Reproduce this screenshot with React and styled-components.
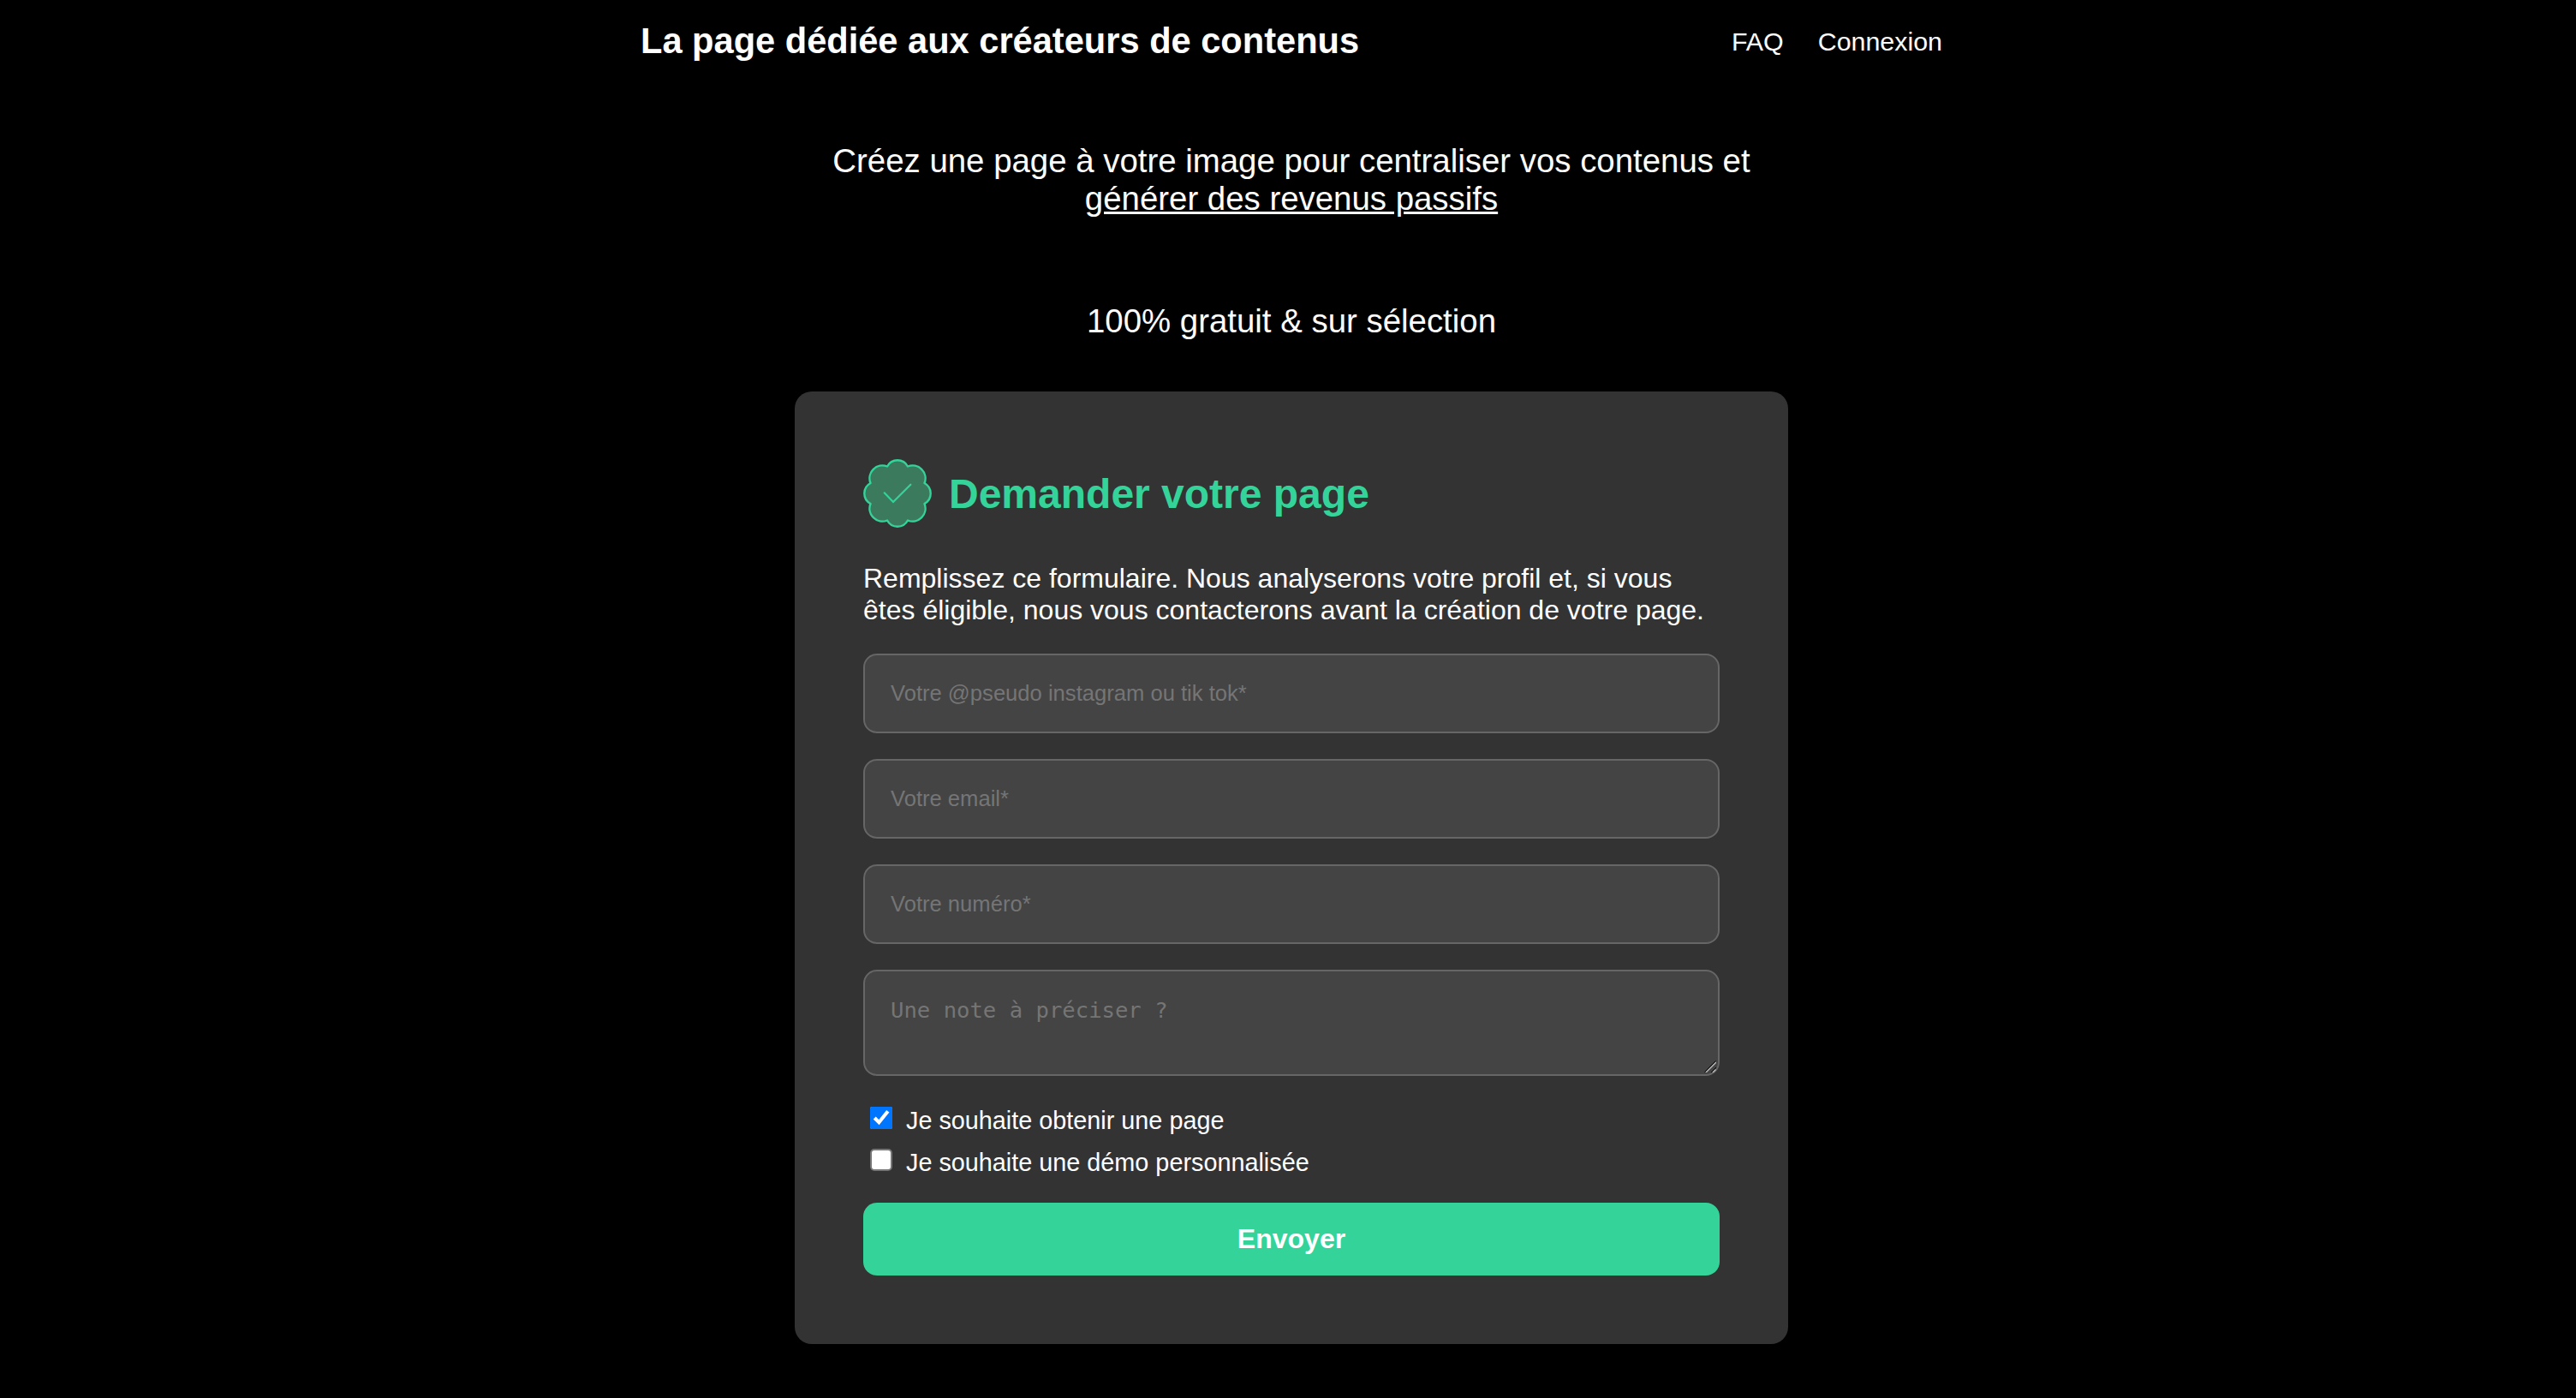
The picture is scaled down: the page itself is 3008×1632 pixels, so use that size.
import React, { useState } from "react";
import styled, { createGlobalStyle } from "styled-components";

const GlobalStyle = createGlobalStyle`
  * {
    box-sizing: border-box;
  }
  body {
    margin: 0 0 0 8px;
    background-color: #000;
    color: #fff;
    font-family: Arial, "Liberation Sans", sans-serif;
  }
  html {
    background-color: #000;
  }
`;

const Page = styled.div`
  display: flex;
  flex-direction: column;
  align-items: center;
  min-height: 1632px;
`;

const Header = styled.header`
  display: flex;
  justify-content: space-between;
  align-items: center;
  width: 1520px;
  height: 96px;
`;

const Title = styled.h1`
  margin: 0;
  font-size: 41.6px;
  line-height: 48px;
`;

const Nav = styled.nav`
  display: flex;
  gap: 40px;
`;

const NavLink = styled.a`
  color: #fff;
  font-size: 30.4px;
  line-height: 35px;
  text-decoration: none;
`;

const Intro = styled.section`
  margin: 70px 0 60px;
  width: 1160px;
  text-align: center;
  font-size: 38.4px;
  line-height: 44px;
`;

const Line = styled.p`
  margin: ${({ $top }) => $top || 0}px 0 0;
`;

const Card = styled.form`
  display: flex;
  flex-direction: column;
  width: 1160px;
  padding: 79px 80px 80px;
  border-radius: 20px;
  background-color: #333;
`;

const CardHeader = styled.div`
  display: flex;
  align-items: center;
  gap: 20px;
  height: 80px;
`;

const CardTitle = styled.h2`
  margin: 0;
  padding-top: 2px;
  color: #34d399;
  font-size: 48px;
  line-height: 56px;
`;

const Desc = styled.p`
  margin: 41px 0 32px;
  font-size: 32px;
  line-height: 37px;
`;

const Input = styled.input`
  width: 100%;
  height: 93px;
  margin: 0 0 30px;
  padding: 0 30px;
  border: 2px solid #666;
  border-radius: 16px;
  outline: none;
  background-color: #444;
  color: #fff;
  font-family: Arial, "Liberation Sans", sans-serif;
  font-size: 25.6px;
  &::placeholder {
    color: #757575;
  }
`;

const NoteWrapper = styled.div`
  position: relative;
  height: 124px;
  margin-bottom: 36px;
`;

const Note = styled.textarea`
  display: block;
  width: 100%;
  height: 100%;
  padding: 30px;
  border: 2px solid #666;
  border-radius: 16px;
  outline: none;
  resize: none;
  overflow: hidden;
  background-color: #444;
  color: #fff;
  font-family: "DejaVu Sans Mono", monospace;
  font-size: 25.6px;
  line-height: 30px;
  &::placeholder {
    color: #757575;
  }
`;

const Grip = styled.svg`
  position: absolute;
  right: 4px;
  bottom: 4px;
  pointer-events: none;
`;

const Choices = styled.div`
  display: flex;
  flex-direction: column;
  gap: 16px;
  margin-bottom: 30px;
`;

const Choice = styled.label`
  display: flex;
  align-items: flex-start;
  gap: 16px;
  padding-left: 8px;
  height: 33px;
  font-size: 28.8px;
  line-height: 33px;
`;

const Checkbox = styled.input`
  width: 26px;
  height: 26px;
  margin: 0;
  &:not(:checked) {
    appearance: none;
    border: 2px solid #767676;
    border-radius: 5px;
    background-color: #fff;
  }
`;

const Submit = styled.button`
  height: 85px;
  border: none;
  border-radius: 16px;
  background-color: #34d399;
  color: #fff;
  font-family: Arial, "Liberation Sans", sans-serif;
  font-size: 32px;
  font-weight: 700;
  cursor: pointer;
`;

const Badge = () => (
  <svg width="80" height="80" viewBox="0 0 80 80" fill="none">
    <path
      d="M28 8.5A13.6 13.6 0 0 1 52 8.5A15 15 0 0 1 71.5 28A13.6 13.6 0 0 1 71.5 52A15 15 0 0 1 52 71.5A13.6 13.6 0 0 1 28 71.5A15 15 0 0 1 8.5 52A13.6 13.6 0 0 1 8.5 28A15 15 0 0 1 28 8.5Z"
      fill="#3c7a5e"
      stroke="#34d399"
      strokeWidth="2.4"
      strokeLinejoin="round"
    />
    <path
      d="M24.7 39.3L35 50L55.3 29.7"
      stroke="#34d399"
      strokeWidth="2.2"
      strokeLinecap="round"
    />
  </svg>
);

const fields = [
  { name: "pseudo", placeholder: "Votre @pseudo instagram ou tik tok*" },
  { name: "email", placeholder: "Votre email*" },
  { name: "phone", placeholder: "Votre numéro*" },
];

const App = () => {
  const [wantsPage, setWantsPage] = useState(true);
  const [wantsDemo, setWantsDemo] = useState(false);

  return (
    <Page>
      <GlobalStyle />
      <Header>
        <Title>La page dédiée aux créateurs de contenus</Title>
        <Nav>
          <NavLink>FAQ</NavLink>
          <NavLink>Connexion</NavLink>
        </Nav>
      </Header>
      <Intro>
        <Line>
          Créez une page à votre image pour centraliser vos contenus et
          <br />
          <u>générer des revenus passifs</u>
        </Line>
        <Line $top={99}>100% gratuit & sur sélection</Line>
      </Intro>
      <Card onSubmit={(e) => e.preventDefault()}>
        <CardHeader>
          <Badge />
          <CardTitle>Demander votre page</CardTitle>
        </CardHeader>
        <Desc>
          Remplissez ce formulaire. Nous analyserons votre profil et, si vous
          êtes éligible, nous vous contacterons avant la création de votre page.
        </Desc>
        {fields.map(({ name, placeholder }) => (
          <Input key={name} name={name} placeholder={placeholder} />
        ))}
        <NoteWrapper>
          <Note name="note" placeholder="Une note à préciser ?" />
          <Grip width="14" height="14" viewBox="0 0 14 14">
            <path d="M0.5 13.5L13.5 0.5M8 14L14 8" stroke="#000" />
            <path d="M2 14L14 2M10 14L13.5 10.5" stroke="#bbb" strokeWidth="1.4" />
          </Grip>
        </NoteWrapper>
        <Choices>
          <Choice>
            <Checkbox
              type="checkbox"
              checked={wantsPage}
              onChange={() => setWantsPage(!wantsPage)}
            />
            Je souhaite obtenir une page
          </Choice>
          <Choice>
            <Checkbox
              type="checkbox"
              checked={wantsDemo}
              onChange={() => setWantsDemo(!wantsDemo)}
            />
            Je souhaite une démo personnalisée
          </Choice>
        </Choices>
        <Submit type="submit">Envoyer</Submit>
      </Card>
    </Page>
  );
};

export default App;
